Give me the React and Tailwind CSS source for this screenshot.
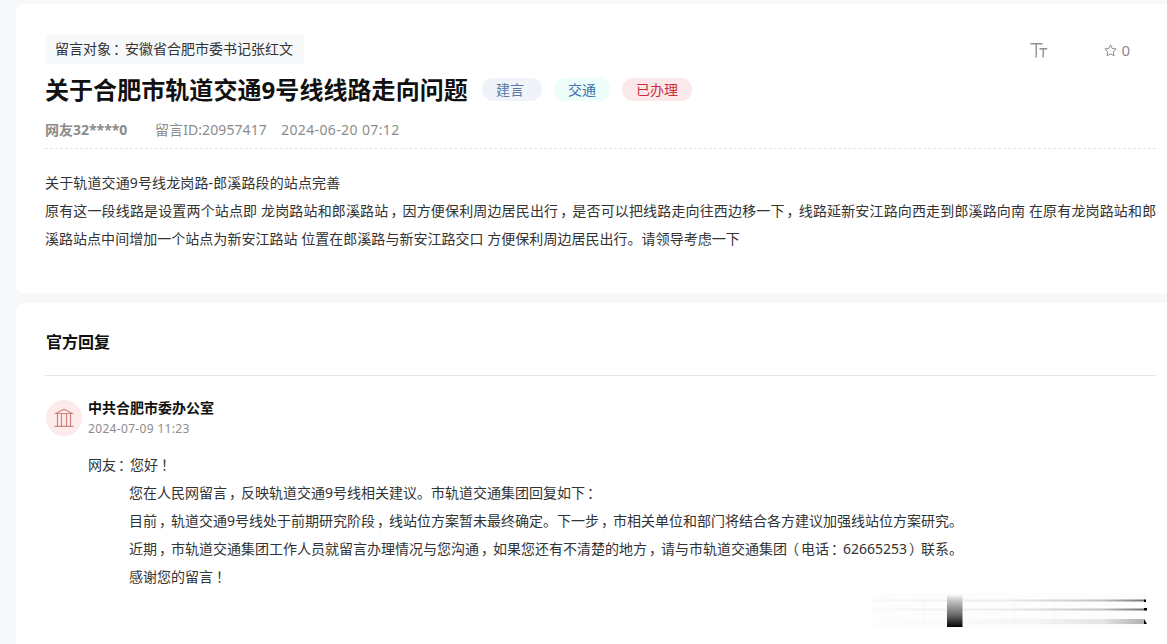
import { Fragment } from "react";

const messageLines = [
  { text: "关于轨道交通9号线龙岗路-郎溪路段的站点完善", className: "tracking-[0.13px]" },
  {
    text: "原有这一段线路是设置两个站点即 龙岗路站和郎溪路站，因方便保利周边居民出行，是否可以把线路走向往西边移一下，线路延新安江路向西走到郎溪路向南 在原有龙岗路站和郎",
    className: "tracking-[0.15px]"
  },
  {
    text: "溪路站点中间增加一个站点为新安江路站 位置在郎溪路与新安江路交口 方便保利周边居民出行。请领导考虑一下",
    className: "tracking-[0.03px]"
  }
];

const replyLines = [
  "您在人民网留言，反映轨道交通9号线相关建议。市轨道交通集团回复如下：",
  "目前，轨道交通9号线处于前期研究阶段，线站位方案暂未最终确定。下一步，市相关单位和部门将结合各方建议加强线站位方案研究。",
  "近期，市轨道交通集团工作人员就留言办理情况与您沟通，如果您还有不清楚的地方，请与市轨道交通集团（电话：62665253）联系。",
  "感谢您的留言！"
];

const tags = [
  { label: "建言", className: "w-[60px] bg-[#f0f3f9] pr-1 text-[#5779a8]" },
  { label: "交通", className: "ml-3 w-[56px] bg-[#edfdfa] text-[#3a6fb0]" },
  { label: "已办理", className: "ml-3 w-[70px] bg-[#fae8ea] text-[#c8303c]" }
];

const punctuationPadding = {
  "，": "pl-[2px] pr-[5px]",
  "：": "pl-[2px] pr-[5px]",
  "！": "pl-[3px] pr-[4px]",
  "（": "pl-[5px] pr-[2px]",
  "）": "pl-[2px] pr-[5px]"
};

// Half-width punctuation, padded back to a full cell so the mark sits near its middle.
const Text = ({ children }) =>
  children.split(/([，：！（）])/).map((part, index) =>
    punctuationPadding[part] ? (
      <span key={index} className={`[font-feature-settings:'halt'] ${punctuationPadding[part]}`}>
        {part}
      </span>
    ) : (
      <Fragment key={index}>{part}</Fragment>
    )
  );

const FontSizeIcon = () => (
  <svg className="h-[17px] w-[18px]" viewBox="0 0 18 17" fill="none" stroke="#8f8f8f" strokeWidth="1.4">
    <path d="M0.5 1.7H12.5M6.2 1.7V15.5M9.5 6.7H17.2M13.2 6.7V15.5" />
  </svg>
);

const StarIcon = () => (
  <svg className="h-[13px] w-[13px]" viewBox="0 0 13 13" fill="none" stroke="#8c8c8c" strokeLinejoin="round">
    <path d="M6.5 0.9L8.2 4.4L12.2 5L9.3 7.7L10 11.8L6.5 9.9L3 11.8L3.7 7.7L0.8 5L4.8 4.4Z" />
  </svg>
);

const OfficeIcon = () => (
  <svg className="h-5 w-5" viewBox="0 0 20 20" fill="none" stroke="#cf857c" strokeWidth="1.2" strokeLinejoin="round">
    <path d="M1.5 5.5L10 1.2L18.5 5.5Z" />
    <path d="M3.5 6V18M7.5 6V18M12.5 6V18M16.5 6V18M0.5 18.4H19.5" />
  </svg>
);

const Streaks = () => (
  <svg className="absolute top-[592px] left-[872px] h-10 w-[280px]" viewBox="0 0 280 40">
    <defs>
      <linearGradient id="block" x1="0" y1="0" x2="0" y2="1">
        <stop offset="0" stopColor="#fff" />
        <stop offset="0.2" stopColor="#c4c4c4" />
        <stop offset="0.65" stopColor="#666" />
        <stop offset="0.95" stopColor="#111" />
        <stop offset="1" stopColor="#000" />
      </linearGradient>
      <linearGradient id="streak" x1="0" y1="0" x2="1" y2="0">
        <stop offset="0" stopColor="#000" stopOpacity="0.02" />
        <stop offset="0.5" stopColor="#000" stopOpacity="0.07" />
        <stop offset="0.85" stopColor="#000" stopOpacity="0.24" />
        <stop offset="1" stopColor="#000" stopOpacity="0.55" />
      </linearGradient>
      <linearGradient id="haze" x1="0" y1="0" x2="1" y2="0">
        <stop offset="0" stopColor="#000" stopOpacity="0" />
        <stop offset="0.6" stopColor="#000" stopOpacity="0.03" />
        <stop offset="0.85" stopColor="#000" stopOpacity="0.1" />
        <stop offset="1" stopColor="#000" stopOpacity="0.3" />
      </linearGradient>
    </defs>
    <rect x="0" y="1" width="274" height="36" fill="#000" fillOpacity="0.006" />
    <path d="M16 2V34M52 2V34M104 2V34M117 2V34M134 2V34M143 2V34M182 2V34M237 2V34" stroke="#000" strokeOpacity="0.015" />
    <rect x="0" y="7.5" width="272" height="2" fill="url(#streak)" />
    <rect x="0" y="16.5" width="272" height="2" fill="url(#streak)" />
    <rect x="0" y="27" width="272" height="5" fill="url(#haze)" />
    <rect x="75" y="2" width="15.5" height="33" fill="url(#block)" />
    <rect x="272" y="7.5" width="2" height="2.5" />
    <rect x="272" y="16" width="3" height="2.5" />
    <path d="M272 27L275 32H272Z" />
  </svg>
);

export default function App() {
  return (
    <div className="relative h-[644px] w-[1167px] overflow-hidden bg-[#f6f8fa] pt-1 pl-4 font-['Noto_Sans','Noto_Sans_CJK_SC',sans-serif] text-sm whitespace-nowrap text-[#333]">
      <section className="h-[289px] rounded-l-lg bg-white pt-[30px] pr-[11px] pl-[29px]">
        <div className="flex h-[30px] justify-between">
          <div className="ml-px w-[258px] bg-[#f6f8fa] pl-[9px] leading-[30px]">
            <Text>留言对象：安徽省合肥市委书记张红文</Text>
          </div>
          <div className="flex items-center pt-[2px] pr-[26px] text-[#8c8c8c]">
            <FontSizeIcon />
            <div className="ml-[56px] flex items-center gap-1">
              <StarIcon />
              <span className="text-[15px] leading-[30px]">0</span>
            </div>
          </div>
        </div>

        <div className="flex h-[51px] items-center">
          <h1 className="w-[437px] text-2xl font-bold tracking-[0.06px] text-[#111]">
            关于合肥市轨道交通9号线线路走向问题
          </h1>
          {tags.map((tag) => (
            <span
              key={tag.label}
              className={`flex h-[23px] items-center justify-center rounded-full ${tag.className}`}
            >
              {tag.label}
            </span>
          ))}
        </div>

        <div className="mt-px flex h-[33px] border-b border-dashed border-[#e4e4e4] leading-7 text-[#8c8c8c]">
          <span className="w-[110px] font-bold">网友32****0</span>
          <span className="w-[126px] tracking-[0.08px]">留言ID:20957417</span>
          <span className="tracking-[0.38px]">2024-06-20 07:12</span>
        </div>

        <div className="pt-5 leading-7">
          {messageLines.map((line) => (
            <p key={line.text} className={line.className}>
              <Text>{line.text}</Text>
            </p>
          ))}
        </div>
      </section>

      <section className="mt-[10px] h-[341px] rounded-tl-lg bg-white pr-[11px] pl-[29px]">
        <h2 className="h-[73px] border-b border-[#e5e5e5] pt-[25px] pl-px text-base leading-7 font-bold text-[#111]">
          官方回复
        </h2>
        <div className="flex pt-[22px]">
          <div className="mt-[2px] ml-px flex size-9 items-center justify-center rounded-full bg-[#fdebeb]">
            <OfficeIcon />
          </div>
          <div className="ml-[6px]">
            <h3 className="leading-5 font-bold text-[#111]">中共合肥市委办公室</h3>
            <p className="pt-px text-xs leading-5 tracking-[0.33px] text-[#8c8c8c]">2024-07-09 11:23</p>
            <div className="mt-3 leading-7">
              <p>
                <Text>网友：您好！</Text>
              </p>
              {replyLines.map((line) => (
                <p key={line} className="pl-[41px]">
                  <Text>{line}</Text>
                </p>
              ))}
            </div>
          </div>
        </div>
      </section>
      <Streaks />
    </div>
  );
}
